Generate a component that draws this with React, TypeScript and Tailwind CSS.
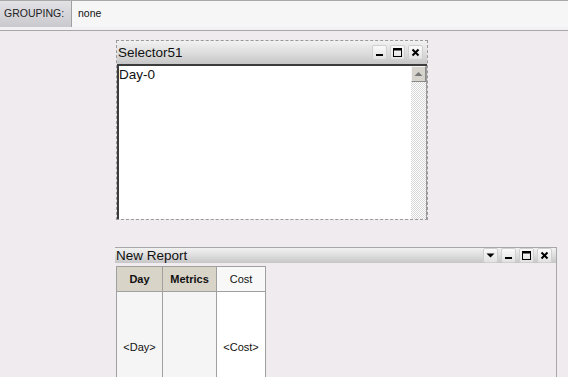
import React from 'react';

const font = { fontFamily: '"Liberation Sans", Arial, sans-serif' };

// Small window control buttons drawn as svg glyphs
const WinButton = ({ kind }: { kind: 'min' | 'max' | 'close' | 'menu' }) => (
  <div className="w-[15px] h-[15px] flex items-center justify-center bg-gradient-to-b from-[#fafafa] to-[#e2e2e2] border border-[#d0d0d0] rounded-[2px]">
    <svg width="11" height="11" viewBox="0 0 11 11">
      {kind === 'min' && <rect x="2" y="7" width="7" height="2" fill="#000" />}
      {kind === 'max' && (
        <>
          <rect x="1.5" y="1.5" width="8" height="8" fill="none" stroke="#000" />
          <rect x="1.5" y="1.5" width="8" height="2" fill="#000" />
        </>
      )}
      {kind === 'close' && (
        <path d="M2.5 2.5 L8.5 8.5 M8.5 2.5 L2.5 8.5" stroke="#000" strokeWidth="2" />
      )}
      {kind === 'menu' && <path d="M1.5 3.5 H9.5 L5.5 7.5 Z" fill="#000" />}
    </svg>
  </div>
);

const TitleBar = ({ title, buttons, h }: { title: string; buttons: ('min' | 'max' | 'close' | 'menu')[]; h: string }) => (
  <div className={`flex items-center justify-between ${h} bg-gradient-to-b from-[#f2f2f2] via-[#dedede] to-[#c6c6c6] pr-[4px]`}>
    <span className="text-[13.5px] text-[#111] leading-none pl-[1px]">{title}</span>
    <div className="flex gap-[3px]">
      {buttons.map((b, i) => (
        <WinButton key={i} kind={b} />
      ))}
    </div>
  </div>
);

export default function App() {
  return (
    <div className="w-[568px] h-[377px] overflow-hidden bg-[#efebef]" style={font}>
      {/* Grouping bar */}
      <div className="border-t border-[#a8a8a8] flex h-[27px]">
        <div className="w-[72px] flex items-center pl-[4px] text-[10.5px] text-[#222] bg-gradient-to-b from-[#e2e2e6] to-[#c9c9ce] border-r border-[#a0a0a0]">
          GROUPING:
        </div>
        <div className="flex-1 flex items-center pl-[6px] text-[10.5px] text-[#111] bg-[#f6f6f6]">none</div>
      </div>
      <div className="h-[4px] bg-[#f3f1f3] border-b border-[#a8a8a8]" />

      {/* Selector panel */}
      <div className="ml-[116px] mt-[9px] w-[312px] h-[180px] border border-dashed border-[#9a9a9a] flex flex-col">
        <TitleBar title="Selector51" buttons={['min', 'max', 'close']} h="h-[23px]" />
        <div className="flex-1 flex border-l-2 border-t-2 border-[#3c3c3c] bg-white">
          <div className="flex-1 text-[13.5px] text-[#111] leading-[16px] pt-[1px]">Day-0</div>
          <div className="w-[16px] flex flex-col bg-[repeating-conic-gradient(#d8d8d8_0_25%,#ffffff_0_50%)] bg-[length:2px_2px] border-r border-[#9a9a9a]">
            <div className="h-[16px] bg-[#d6d3cc] border border-[#f4f4f4] border-r-[#8a8a8a] border-b-[#8a8a8a] flex items-center justify-center">
              <svg width="9" height="6" viewBox="0 0 9 6">
                <path d="M0.5 5 L4.5 1 L8.5 5 Z" fill="#777" />
              </svg>
            </div>
          </div>
        </div>
      </div>

      {/* New Report panel */}
      <div className="ml-[115px] mt-[27px] w-[442px] h-[140px] border-t border-r border-[#a8a8a8] flex flex-col">
        <TitleBar title="New Report" buttons={['menu', 'min', 'max', 'close']} h="h-[20px]" />
        <div className="mt-[3px] ml-[1px] flex border border-[#a0a0a0] w-[150px] text-[11px] text-[#111]">
          <div className="w-[46px] flex flex-col border-r border-[#a0a0a0]">
            <div className="h-[25px] bg-[#d8d4c8] font-bold flex items-center justify-center border-b border-[#a0a0a0]">Day</div>
            <div className="h-[110px] bg-[#f5f5f5] flex items-center justify-center">&lt;Day&gt;</div>
          </div>
          <div className="w-[54px] flex flex-col border-r border-[#a0a0a0]">
            <div className="h-[25px] bg-[#d8d4c8] font-bold flex items-center justify-center border-b border-[#a0a0a0]">Metrics</div>
            <div className="h-[110px] bg-[#f5f5f5]" />
          </div>
          <div className="flex-1 flex flex-col">
            <div className="h-[25px] bg-[#f8f8f8] flex items-center justify-center border-b border-[#a0a0a0]">Cost</div>
            <div className="h-[110px] bg-white flex items-center justify-center">&lt;Cost&gt;</div>
          </div>
        </div>
      </div>
    </div>
  );
}
